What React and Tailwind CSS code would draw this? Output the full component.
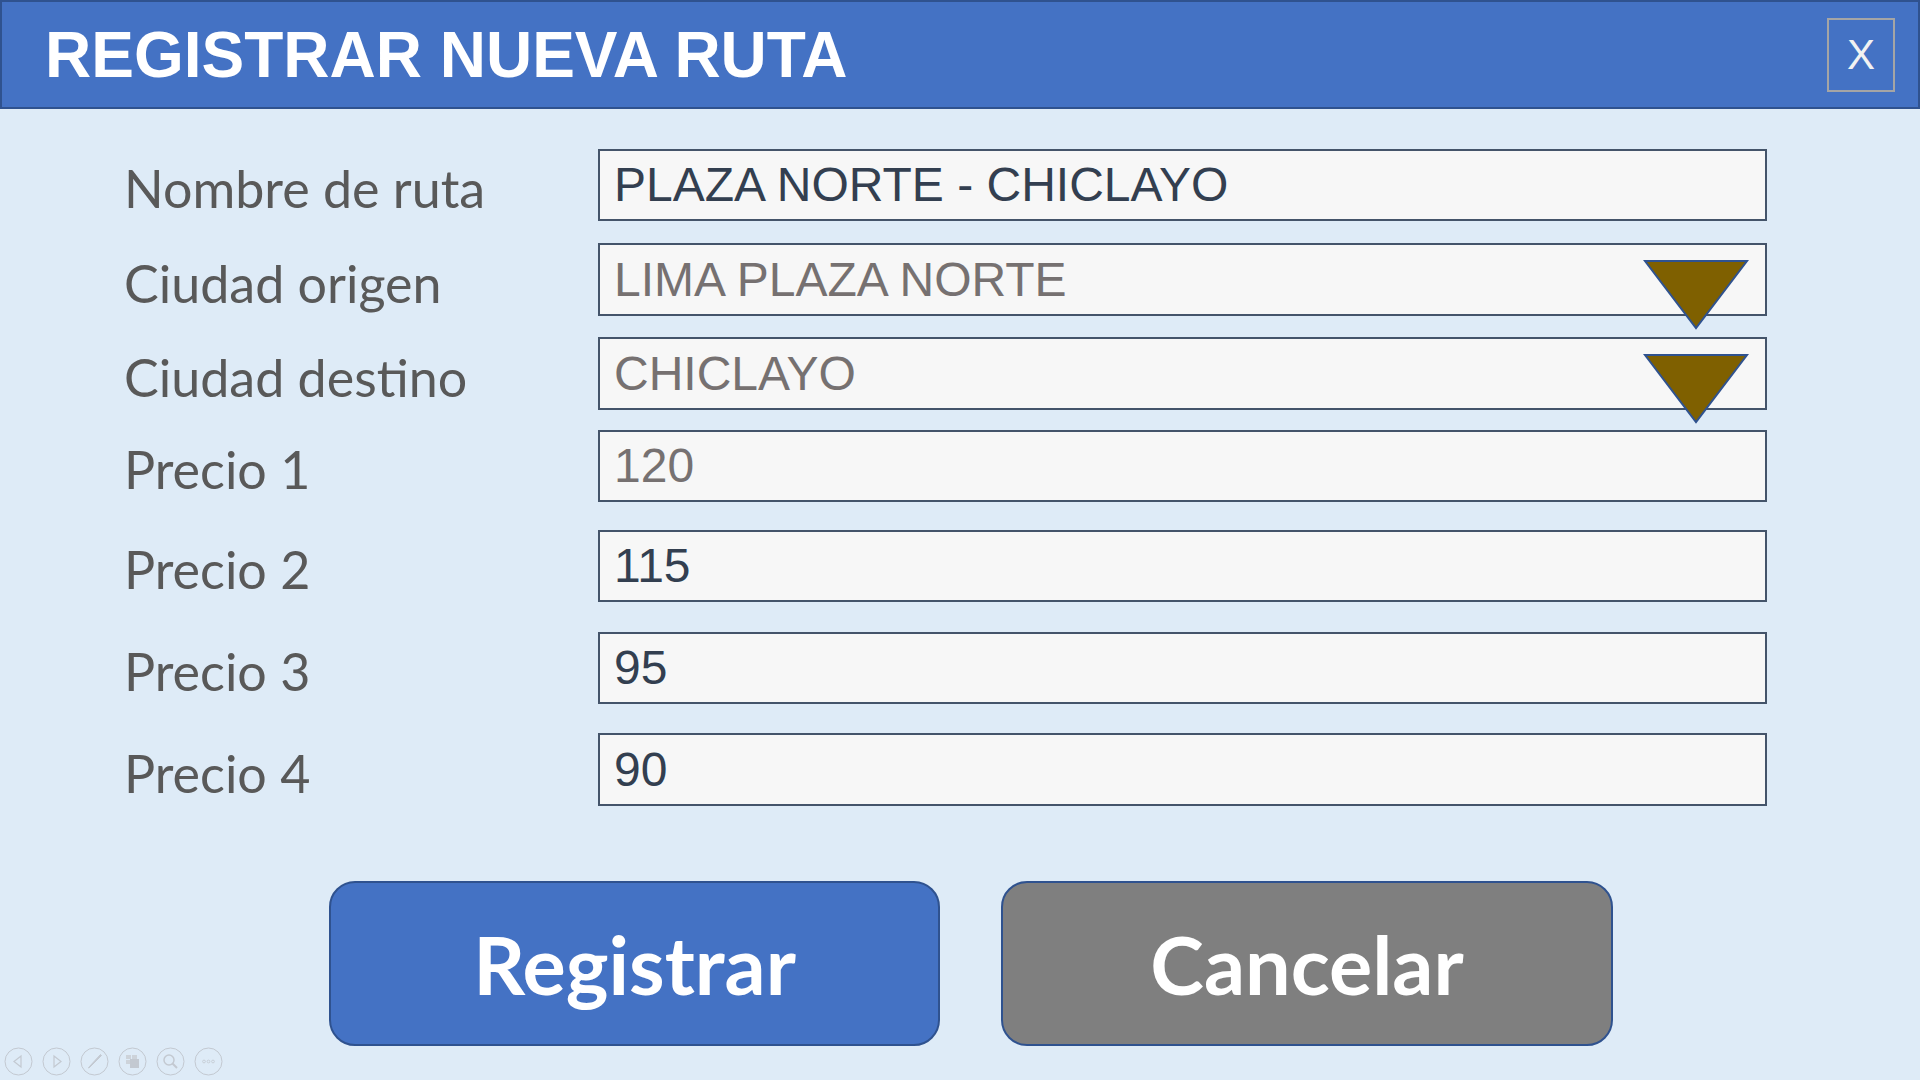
import React from 'react';

const rows = [
    { label: 'Nombre de ruta', value: 'PLAZA NORTE - CHICLAYO', dark: true, mt: 'mt-0', h: 'h-[72px]' },
    { label: 'Ciudad origen', value: 'LIMA PLAZA NORTE', dark: false, select: true, mt: 'mt-[22px]', h: 'h-[73px]' },
    { label: 'Ciudad destino', value: 'CHICLAYO', dark: false, select: true, mt: 'mt-[21px]', h: 'h-[73px]' },
    { label: 'Precio 1', value: '120', dark: false, mt: 'mt-[20px]', h: 'h-[72px]' },
    { label: 'Precio 2', value: '115', dark: true, mt: 'mt-[28px]', h: 'h-[72px]' },
    { label: 'Precio 3', value: '95', dark: true, mt: 'mt-[30px]', h: 'h-[72px]' },
    { label: 'Precio 4', value: '90', dark: true, mt: 'mt-[29px]', h: 'h-[73px]' },
];

const DropArrow = () => (
    <svg className="absolute right-[16px] top-[14px]" width="106" height="72" viewBox="0 0 106 72">
        <polygon points="2,2 104,2 53,69" fill="#7F6000" stroke="#2F528F" strokeWidth="2" strokeLinejoin="miter" />
    </svg>
);

const SlideControls = () => (
    <div className="absolute left-[4px] bottom-[4px] flex gap-[9px]">
        {/* previous */}
        <svg width="29" height="29" viewBox="0 0 29 29">
            <circle cx="14.5" cy="14.5" r="13.5" fill="none" stroke="#C3C9D1" strokeWidth="1" />
            <polygon points="17,9 17,20 10,14.5" fill="none" stroke="#C3C9D1" strokeWidth="1.2" />
        </svg>
        {/* next */}
        <svg width="29" height="29" viewBox="0 0 29 29">
            <circle cx="14.5" cy="14.5" r="13.5" fill="none" stroke="#C3C9D1" strokeWidth="1" />
            <polygon points="12,9 12,20 19,14.5" fill="none" stroke="#C3C9D1" strokeWidth="1.2" />
        </svg>
        {/* pen */}
        <svg width="29" height="29" viewBox="0 0 29 29">
            <circle cx="14.5" cy="14.5" r="13.5" fill="none" stroke="#C3C9D1" strokeWidth="1" />
            <path d="M20.5 7.5 L9.5 19.5 L8.5 21 L10 20 L21.5 8.5 Z" fill="#C3C9D1" stroke="#C3C9D1" strokeWidth="1" />
        </svg>
        {/* slides */}
        <svg width="29" height="29" viewBox="0 0 29 29">
            <circle cx="14.5" cy="14.5" r="13.5" fill="none" stroke="#C3C9D1" strokeWidth="1" />
            <rect x="8" y="8" width="5" height="4" fill="#CDD3DA" />
            <rect x="14" y="8" width="5" height="4" fill="#CDD3DA" />
            <rect x="8" y="13" width="5" height="4" fill="#CDD3DA" />
            <rect x="12" y="12" width="9" height="9" fill="#C3C9D1" />
        </svg>
        {/* zoom */}
        <svg width="29" height="29" viewBox="0 0 29 29">
            <circle cx="14.5" cy="14.5" r="13.5" fill="none" stroke="#C3C9D1" strokeWidth="1" />
            <circle cx="13" cy="13" r="5" fill="none" stroke="#C3C9D1" strokeWidth="1.5" />
            <line x1="16.5" y1="16.5" x2="21" y2="21" stroke="#C3C9D1" strokeWidth="2" />
        </svg>
        {/* more */}
        <svg width="29" height="29" viewBox="0 0 29 29">
            <circle cx="14.5" cy="14.5" r="13.5" fill="none" stroke="#C3C9D1" strokeWidth="1" />
            <circle cx="10" cy="14.5" r="1.4" fill="none" stroke="#C3C9D1" strokeWidth="0.8" />
            <circle cx="14.5" cy="14.5" r="1.4" fill="none" stroke="#C3C9D1" strokeWidth="0.8" />
            <circle cx="19" cy="14.5" r="1.4" fill="none" stroke="#C3C9D1" strokeWidth="0.8" />
        </svg>
    </div>
);

const App = () => {
    return (
        <div className="relative w-[1920px] h-[1080px] overflow-hidden bg-[#DEEBF7] flex flex-col">
            {/* Header */}
            <div className="h-[109px] shrink-0 bg-[#4472C4] border-2 border-[#2F528F] flex items-center justify-between pl-[43px] pr-[23px]">
                <h1 className="text-white font-bold text-[64px] leading-none font-['Liberation_Sans',Arial,sans-serif]">
                    REGISTRAR NUEVA RUTA
                </h1>
                <button className="w-[68px] h-[74px] border-2 border-[#A5A5A5] flex items-center justify-center text-[#F2F2F2] text-[42px] leading-none font-['Liberation_Sans',Arial,sans-serif]">
                    X
                </button>
            </div>

            {/* Form */}
            <div className="mt-[40px] pl-[124px] flex flex-col">
                {rows.map((row) => (
                    <div key={row.label} className={`flex items-center ${row.mt}`}>
                        <div className="w-[474px] pt-[6px] text-[52px] leading-none text-[#595959] font-['Lato','Open_Sans',sans-serif]">
                            {row.label}
                        </div>
                        <div className={`relative w-[1169px] ${row.h} bg-[#F7F7F7] border-2 border-[#44546A] flex items-center pl-[14px]`}>
                            <span className={`text-[48px] leading-none font-['Liberation_Sans',Arial,sans-serif] ${row.dark ? 'text-[#333F50]' : 'text-[#767171]'}`}>
                                {row.value}
                            </span>
                            {row.select && <DropArrow />}
                        </div>
                    </div>
                ))}
            </div>

            {/* Buttons */}
            <div className="mt-[75px] pl-[329px] flex gap-[61px]">
                <button className="w-[611px] h-[165px] rounded-[26px] bg-[#4472C4] border-2 border-[#2F528F] flex items-center justify-center text-white font-bold text-[81px] leading-none font-['Lato','Open_Sans',sans-serif]">
                    Registrar
                </button>
                <button className="w-[612px] h-[165px] rounded-[26px] bg-[#7F7F7F] border-2 border-[#2F528F] flex items-center justify-center text-white font-bold text-[81px] leading-none font-['Lato','Open_Sans',sans-serif]">
                    Cancelar
                </button>
            </div>

            <SlideControls />
        </div>
    );
};

export default App;
